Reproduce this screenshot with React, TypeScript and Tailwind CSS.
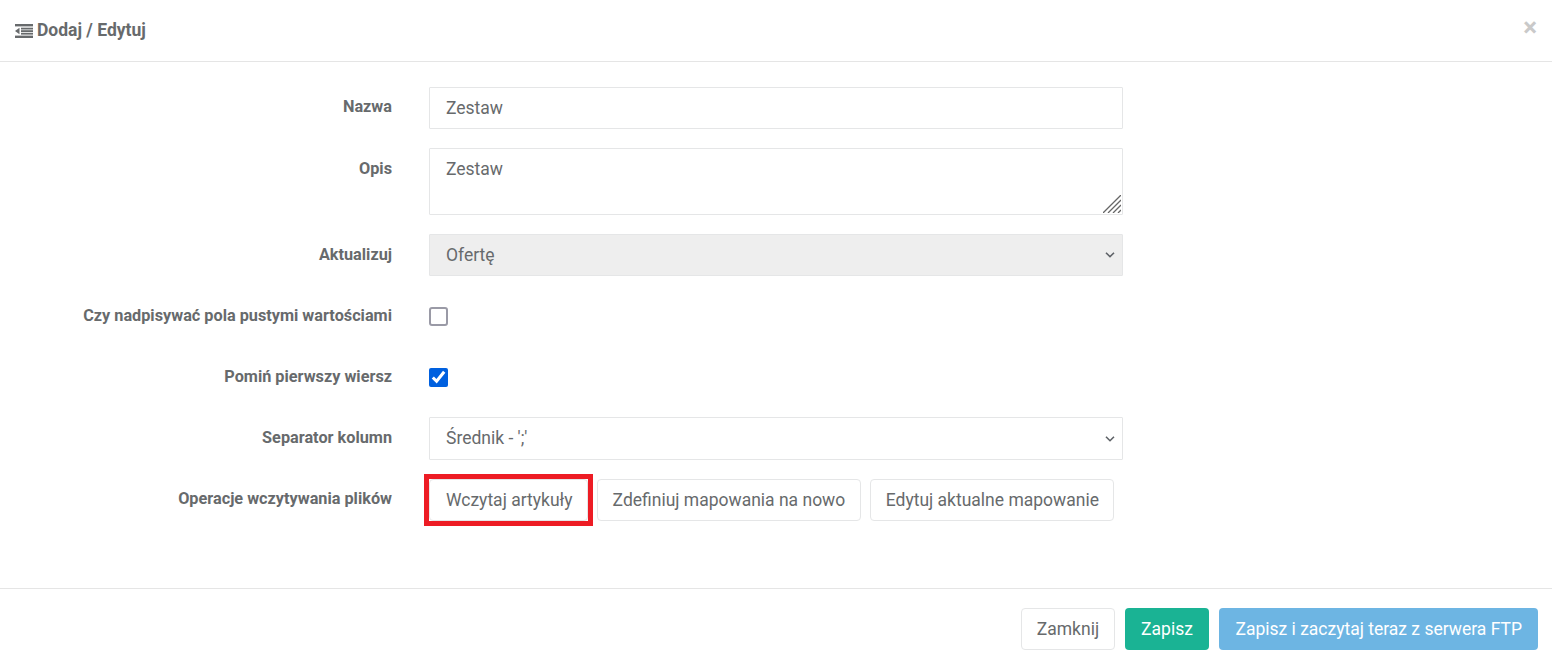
import React from "react";

const labelCls = "w-[392px] shrink-0 text-right text-[16.25px] font-bold text-[#676a6c]";
const fieldCls =
  "w-[694px] border border-[#e5e6e7] rounded-[1px] px-[16px] text-[17.5px] text-[#676a6c] outline-none";
const btnCls = "h-[42px] px-[15px] border border-[#e5e6e7] rounded-[4px] text-[17.5px]";
const btnTightCls = "h-[42px] px-[14.5px] border border-[#e5e6e7] rounded-[4px] text-[17.5px]";

const Chevron = () => (
  <svg
    className="absolute right-[8px] top-1/2 -translate-y-1/2 pointer-events-none"
    width="10"
    height="7"
    viewBox="0 0 10 7"
    fill="none"
    stroke="#5f6368"
    strokeWidth="1.6"
  >
    <path d="M1 1.2 L5 5.2 L9 1.2" />
  </svg>
);

const OutdentIcon = () => (
  <svg width="18" height="14" viewBox="0 0 18 14" fill="#676a6c">
    <rect x="0" y="0" width="18" height="2.4" />
    <rect x="6" y="3.7" width="12" height="1.8" />
    <rect x="6" y="6.2" width="12" height="1.8" />
    <rect x="6" y="8.8" width="12" height="1.8" />
    <rect x="0" y="11.6" width="18" height="2.4" />
    <path d="M0 7 L4.5 3.8 V10.2 Z" />
  </svg>
);

const App = () => {
  return (
    <div className="w-[1552px] h-[663px] bg-white overflow-hidden font-['Roboto',sans-serif] text-[#676a6c]">
      {/* Header */}
      <div className="flex items-center justify-between h-[62px] border-b border-[#e5e5e5] pl-[15px] pr-[15px]">
        <h4 className="flex items-center gap-[4px] text-[17.5px] font-bold">
          <OutdentIcon />
          <span>Dodaj / Edytuj</span>
        </h4>
        <button className="text-[26px] leading-none font-bold text-[#c9c9c9] mb-[8px]">×</button>
      </div>

      {/* Form */}
      <div className="flex flex-col pt-[25px] h-[526px]">
        <div className="flex items-start gap-[37px]">
          <label className={`${labelCls} pt-[8px]`}>Nazwa</label>
          <input className={`${fieldCls} h-[42px]`} defaultValue="Zestaw" />
        </div>
        <div className="flex items-start gap-[37px] mt-[19px]">
          <label className={`${labelCls} pt-[9px]`}>Opis</label>
          <div className="relative">
            <textarea className={`${fieldCls} h-[67px] py-[7px] block resize-none`} defaultValue="Zestaw" />
            <svg
              className="absolute right-[2px] bottom-[2px]"
              width="18"
              height="18"
              viewBox="0 0 18 18"
              stroke="#666666"
              strokeWidth="1.3"
            >
              <path d="M0 18 L18 0 M5 18 L18 5 M10 18 L18 10 M15 18 L18 15" />
            </svg>
          </div>
        </div>
        <div className="flex items-start gap-[37px] mt-[19px]">
          <label className={`${labelCls} pt-[9px]`}>Aktualizuj</label>
          <div className="relative">
            <select className={`${fieldCls} h-[42px] bg-[#eeeeee] appearance-none block`} disabled defaultValue="oferte">
              <option value="oferte">Ofertę</option>
            </select>
            <Chevron />
          </div>
        </div>
        <div className="flex items-center gap-[37px] mt-[31px] h-[19px]">
          <label className={labelCls}>Czy nadpisywać pola pustymi wartościami</label>
          <input type="checkbox" className="w-[19px] h-[19px] appearance-none border-2 border-[#9a9aa6] rounded-[3px] bg-white" />
        </div>
        <div className="flex items-center gap-[37px] mt-[42px] h-[19px]">
          <label className={labelCls}>Pomiń pierwszy wiersz</label>
          <input type="checkbox" defaultChecked className="w-[19px] h-[19px] accent-[#0060df]" />
        </div>
        <div className="flex items-start gap-[37px] mt-[30px]">
          <label className={`${labelCls} pt-[9px]`}>Separator kolumn</label>
          <div className="relative">
            <select className={`${fieldCls} h-[43px] bg-white appearance-none block`} defaultValue="sr">
              <option value="sr">Średnik - ';'</option>
            </select>
            <Chevron />
          </div>
        </div>
        <div className="flex items-start gap-[37px] mt-[19px]">
          <label className={`${labelCls} pt-[8px]`}>Operacje wczytywania plików</label>
          <div className="flex gap-[9px]">
            <button className="relative h-[42px] pl-[16px] pr-[14px] border border-[#e5e6e7] rounded-[4px] text-[17.5px]">
              Wczytaj artykuły
              <span className="absolute -left-[6px] -top-[6px] -right-[6px] -bottom-[6px] border-[5px] border-[#ed1c24]"></span>
            </button>
            <button className={btnCls}>Zdefiniuj mapowania na nowo</button>
            <button className={btnTightCls}>Edytuj aktualne mapowanie</button>
          </div>
        </div>
      </div>

      {/* Footer */}
      <div className="flex justify-end gap-[10px] border-t border-[#e5e5e5] pt-[19px] pr-[14px]">
        <button className={btnTightCls}>Zamknij</button>
        <button className="h-[42px] px-[16.5px] rounded-[4px] text-[17.5px] text-white bg-[#1ab394]">Zapisz</button>
        <button className="h-[42px] px-[16px] rounded-[4px] text-[17.5px] text-white bg-[#6db5e3]">
          Zapisz i zaczytaj teraz z serwera FTP
        </button>
      </div>
    </div>
  );
};

export default App;
